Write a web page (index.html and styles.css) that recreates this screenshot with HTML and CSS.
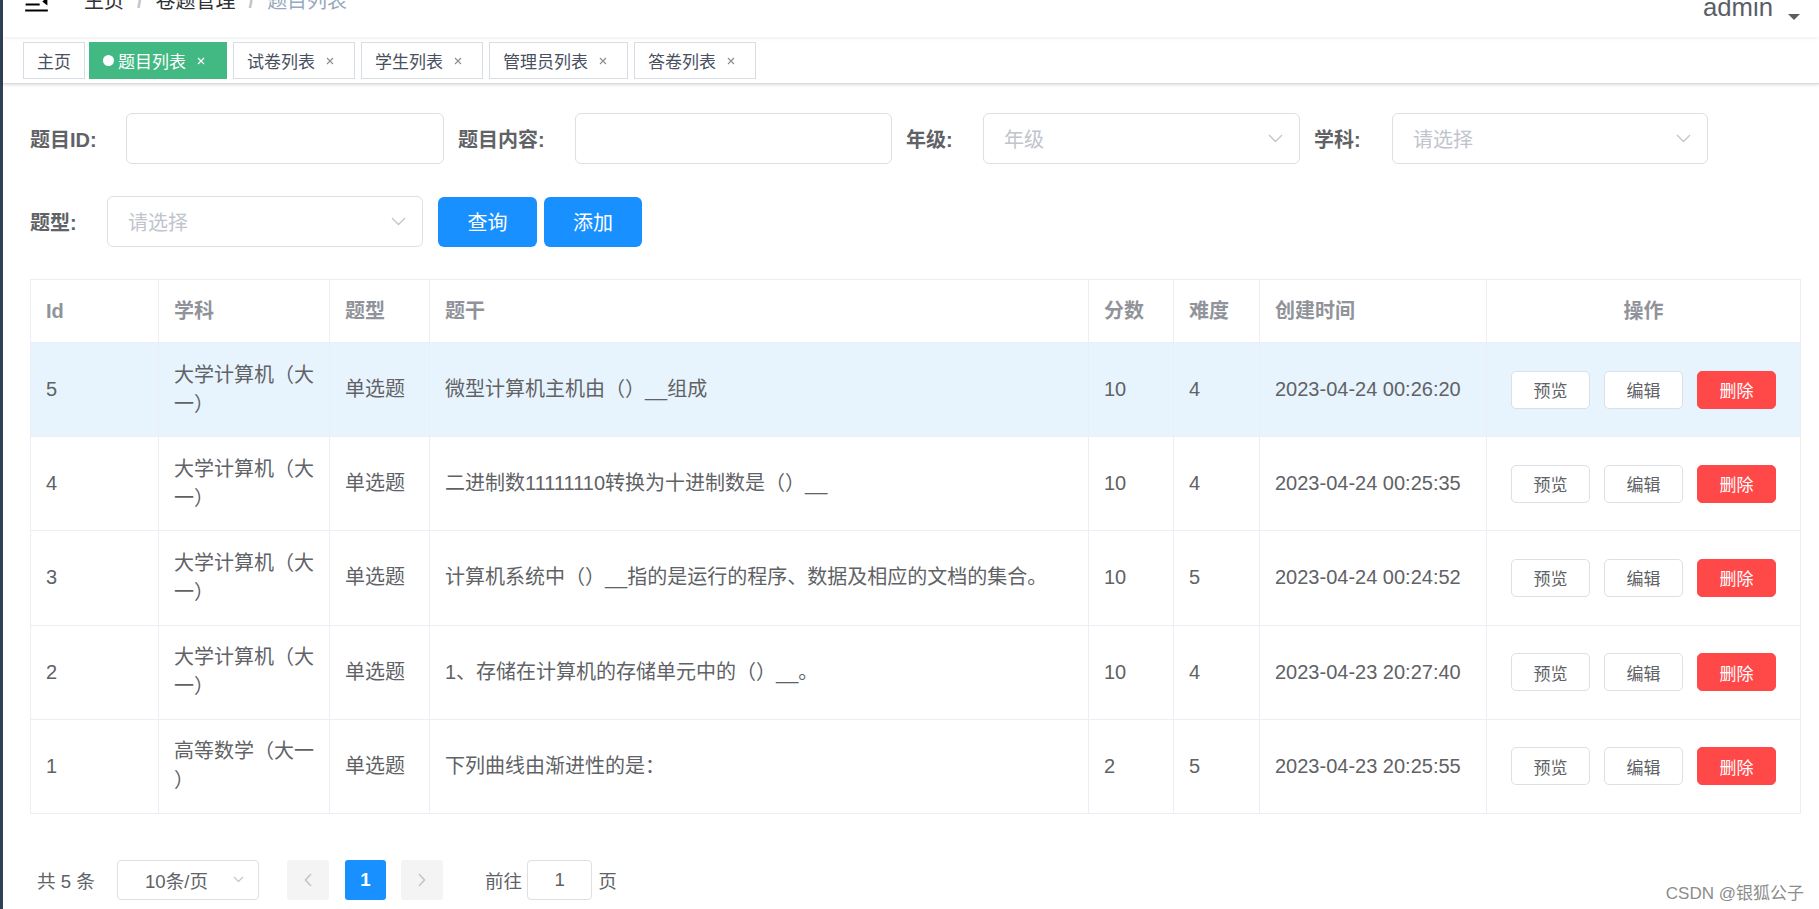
FILE: index.html
```html
<!DOCTYPE html>
<html lang="zh-CN">
<head>
<meta charset="utf-8">
<title>题目列表</title>
<link rel="stylesheet" href="styles.css">
</head>
<body>
<div class="app">
  <aside class="sidebar"></aside>
  <div class="main">
    <div class="navbar">
      <div class="hamburger">
        <svg class="ham-icon" viewBox="0 0 1024 1024" width="29" height="29"><path transform="rotate(180 512 512)" fill="#000" d="M408 442h480c4.4 0 8-3.6 8-8v-56c0-4.4-3.6-8-8-8H408c-4.4 0-8 3.6-8 8v56c0 4.4 3.6 8 8 8zm-8 204c0 4.4 3.6 8 8 8h480c4.4 0 8-3.6 8-8v-56c0-4.4-3.6-8-8-8H408c-4.4 0-8 3.6-8 8v56zm504-486H120c-4.4 0-8 3.6-8 8v56c0 4.4 3.6 8 8 8h784c4.4 0 8-3.6 8-8v-56c0-4.4-3.6-8-8-8zm0 632H120c-4.4 0-8 3.6-8 8v56c0 4.4 3.6 8 8 8h784c4.4 0 8-3.6 8-8v-56c0-4.4-3.6-8-8-8zM142.4 642.1L298.7 519a8.840 8.840 0 0 0 0-13.9L142.4 381.9c-5.8-4.6-14.4-.5-14.4 6.9v246.3a8.9 8.9 0 0 0 14.4 7z"/></svg>
      </div>
      <nav class="breadcrumb">
        <span class="bc-item">主页</span><span class="bc-sep">/</span><span class="bc-item">卷题管理</span><span class="bc-sep">/</span><span class="bc-item bc-last">题目列表</span>
      </nav>
      <div class="right-menu">
        <span class="user">admin</span>
        <svg class="caret" width="12" height="6" viewBox="0 0 12 6"><path d="M0 0h12L6 6z" fill="#5a5e66"/></svg>
      </div>
    </div>

    <div class="tags-view">
      <span class="tag">主页</span>
      <span class="tag active"><i class="dot"></i>题目列表<span class="close"><svg width="8" height="8" viewBox="0 0 8 8"><path d="M1 1l6 6M7 1L1 7" stroke="currentColor" stroke-width="1.2"/></svg></span></span>
      <span class="tag">试卷列表<span class="close"><svg width="8" height="8" viewBox="0 0 8 8"><path d="M1 1l6 6M7 1L1 7" stroke="currentColor" stroke-width="1.2"/></svg></span></span>
      <span class="tag">学生列表<span class="close"><svg width="8" height="8" viewBox="0 0 8 8"><path d="M1 1l6 6M7 1L1 7" stroke="currentColor" stroke-width="1.2"/></svg></span></span>
      <span class="tag">管理员列表<span class="close"><svg width="8" height="8" viewBox="0 0 8 8"><path d="M1 1l6 6M7 1L1 7" stroke="currentColor" stroke-width="1.2"/></svg></span></span>
      <span class="tag">答卷列表<span class="close"><svg width="8" height="8" viewBox="0 0 8 8"><path d="M1 1l6 6M7 1L1 7" stroke="currentColor" stroke-width="1.2"/></svg></span></span>
    </div>

    <div class="content">
      <div class="search">
        <div class="form-row">
          <div class="form-item"><label class="label w96">题目ID:</label><div class="input w318"></div></div>
          <div class="form-item"><label class="label w117">题目内容:</label><div class="input w317"></div></div>
          <div class="form-item"><label class="label w77">年级:</label><div class="input w317"><span class="ph">年级</span><svg class="arrow" width="15" height="9" viewBox="0 0 15 9"><path d="M1 1l6.5 6.5L14 1" fill="none" stroke="#c0c4cc" stroke-width="1.3"/></svg></div></div>
          <div class="form-item"><label class="label w78">学科:</label><div class="input w316"><span class="ph">请选择</span><svg class="arrow" width="15" height="9" viewBox="0 0 15 9"><path d="M1 1l6.5 6.5L14 1" fill="none" stroke="#c0c4cc" stroke-width="1.3"/></svg></div></div>
        </div>
        <div class="form-row">
          <div class="form-item"><label class="label w77">题型:</label><div class="input w316"><span class="ph">请选择</span><svg class="arrow" width="15" height="9" viewBox="0 0 15 9"><path d="M1 1l6.5 6.5L14 1" fill="none" stroke="#c0c4cc" stroke-width="1.3"/></svg></div></div>
          <button class="btn-primary b1">查询</button>
          <button class="btn-primary b2">添加</button>
        </div>
      </div>

      <table class="grid">
        <colgroup>
          <col style="width:128px"><col style="width:171px"><col style="width:100px"><col style="width:659px"><col style="width:85px"><col style="width:86px"><col style="width:227px"><col style="width:314px">
        </colgroup>
        <thead>
          <tr><th>Id</th><th>学科</th><th>题型</th><th>题干</th><th>分数</th><th>难度</th><th>创建时间</th><th class="center">操作</th></tr>
        </thead>
        <tbody>
          <tr class="hover">
            <td>5</td><td class="subj">大学计算机（大一）</td><td>单选题</td><td>微型计算机主机由（）__组成</td><td>10</td><td>4</td><td>2023-04-24 00:26:20</td>
            <td><div class="ops"><button class="btn">预览</button><button class="btn">编辑</button><button class="btn danger">删除</button></div></td>
          </tr>
          <tr>
            <td>4</td><td class="subj">大学计算机（大一）</td><td>单选题</td><td>二进制数11111110转换为十进制数是（）__</td><td>10</td><td>4</td><td>2023-04-24 00:25:35</td>
            <td><div class="ops"><button class="btn">预览</button><button class="btn">编辑</button><button class="btn danger">删除</button></div></td>
          </tr>
          <tr>
            <td>3</td><td class="subj">大学计算机（大一）</td><td>单选题</td><td>计算机系统中（）__指的是运行的程序、数据及相应的文档的集合。</td><td>10</td><td>5</td><td>2023-04-24 00:24:52</td>
            <td><div class="ops"><button class="btn">预览</button><button class="btn">编辑</button><button class="btn danger">删除</button></div></td>
          </tr>
          <tr>
            <td>2</td><td class="subj">大学计算机（大一）</td><td>单选题</td><td>1、存储在计算机的存储单元中的（）__。</td><td>10</td><td>4</td><td>2023-04-23 20:27:40</td>
            <td><div class="ops"><button class="btn">预览</button><button class="btn">编辑</button><button class="btn danger">删除</button></div></td>
          </tr>
          <tr>
            <td>1</td><td class="subj">高等数学（大一）</td><td>单选题</td><td>下列曲线由渐进性的是：</td><td>2</td><td>5</td><td>2023-04-23 20:25:55</td>
            <td><div class="ops"><button class="btn">预览</button><button class="btn">编辑</button><button class="btn danger">删除</button></div></td>
          </tr>
        </tbody>
      </table>

      <div class="pagination">
        <span class="total">共 5 条</span>
        <div class="sizes"><span>10条/页</span><svg width="11" height="7" viewBox="0 0 11 7"><path d="M1 1l4.5 4.5L10 1" fill="none" stroke="#c0c4cc" stroke-width="1.2"/></svg></div>
        <span class="pg-btn prev"><svg width="8" height="14" viewBox="0 0 8 14"><path d="M7 1L1.5 7 7 13" fill="none" stroke="#c0c4cc" stroke-width="1.6"/></svg></span>
        <span class="pager">1</span>
        <span class="pg-btn next"><svg width="8" height="14" viewBox="0 0 8 14"><path d="M1 1l5.5 6L1 13" fill="none" stroke="#c0c4cc" stroke-width="1.6"/></svg></span>
        <span class="goto">前往</span>
        <span class="jump">1</span>
        <span class="page-word">页</span>
      </div>
    </div>
  </div>
</div>
<div class="watermark">CSDN @银狐公子</div>
</body>
</html>
```

FILE: styles.css
```css
html, body {
  margin: 0;
  padding: 0;
  height: 100%;
  overflow: hidden;
  background: #fff;
}
body {
  font-family: "Liberation Sans", "Noto Sans CJK SC", sans-serif;
  color: #606266;
}
.app {
  display: flex;
  height: 909px;
}
.sidebar {
  width: 3px;
  flex: none;
  background: #304156;
}
.main {
  flex: 1;
  min-width: 0;
  display: flex;
  flex-direction: column;
}

/* navbar */
.navbar {
  height: 72px;
  margin-top: -35px;
  display: flex;
  align-items: center;
  box-shadow: 0 1px 4px rgba(0, 21, 41, 0.08);
  position: relative;
  z-index: 2;
  background: #fff;
}
.hamburger {
  padding: 0 21px 0 19px;
  display: flex;
  align-items: center;
}
.ham-icon { display: block; }
.breadcrumb {
  margin-left: 12px;
  font-size: 20px;
  line-height: 72px;
  display: flex;
}
.bc-item { color: #303133; }
.bc-last { color: #97a8be; }
.bc-sep {
  color: #c0c4cc;
  margin: 0 13px;
  font-weight: bold;
}
.right-menu {
  margin-left: auto;
  align-self: flex-start;
  margin-top: 27px;
  padding-right: 19px;
  display: flex;
  align-items: flex-start;
}
.user {
  font-size: 25.7px;
  line-height: 30px;
  color: #5a5e66;
}
.caret {
  margin-left: 15px;
  margin-top: 22px;
}

/* tags */
.tags-view {
  height: 46px;
  border-bottom: 1px solid #d8dce5;
  box-shadow: 0 1px 3px 0 rgba(0, 0, 0, 0.12), 0 0 3px 0 rgba(0, 0, 0, 0.04);
  display: flex;
  align-items: flex-start;
  padding-left: 20px;
  background: #fff;
}
.tag {
  margin-top: 5px;
  height: 37px;
  box-sizing: border-box;
  border: 1px solid #d8dce5;
  background: #fff;
  color: #495060;
  font-size: 17px;
  padding: 0 13px;
  margin-right: 6px;
  display: flex;
  align-items: center;
}
.tag:first-child { margin-right: 4px; }
.tag.active {
  background: #42b983;
  border-color: #42b983;
  color: #fff;
  padding-right: 14px;
}
.dot {
  width: 11px;
  height: 11px;
  border-radius: 50%;
  background: #fff;
  margin-right: 4px;
}
.close {
  width: 22px;
  margin-left: 4px;
  display: flex;
  justify-content: center;
  align-items: center;
  color: #8a8f99;
}
.tag.active .close { color: #fff; }

/* content */
.content {
  padding: 29px 19px 0 27px;
}
.form-row {
  display: flex;
  align-items: center;
  height: 51px;
  margin-bottom: 32px;
}
.form-item {
  display: flex;
  align-items: center;
  margin-right: 14px;
}
.label {
  font-size: 20px;
  font-weight: bold;
  color: #606266;
}
.w96 { width: 96px; }
.w117 { width: 117px; }
.w77 { width: 77px; }
.w78 { width: 78px; }
.input {
  height: 51px;
  box-sizing: border-box;
  border: 1px solid #dcdfe6;
  border-radius: 6px;
  padding: 0 16px 0 20px;
  display: flex;
  align-items: center;
  justify-content: space-between;
}
.w318 { width: 318px; }
.w317 { width: 317px; }
.w316 { width: 316px; }
.ph {
  font-size: 20px;
  color: #c0c4cc;
}
.btn-primary {
  height: 50px;
  border: none;
  border-radius: 6px;
  background: #1890ff;
  color: #fff;
  font-family: inherit;
  font-size: 20px;
  padding: 0;
}
.b1 { width: 99px; margin-left: 1px; }
.b2 { width: 98px; margin-left: 7px; }

/* table */
.grid {
  width: 1770px;
  table-layout: fixed;
  border-collapse: collapse;
  border: 1px solid #ebeef5;
}
.grid th, .grid td {
  border: 1px solid #ebeef5;
  text-align: left;
  line-height: 29px;
  font-size: 20px;
}
.grid th {
  padding: 16.5px 15px;
  color: #909399;
  font-weight: bold;
}
.grid th.center { text-align: center; }
.grid td {
  padding: 17.6px 15px;
  color: #606266;
  vertical-align: middle;
}
.grid td.subj {
  padding-right: 12px;
  line-break: anywhere;
}
.grid tr.hover td { background: #e8f4fd; }
.ops {
  display: flex;
  justify-content: center;
  gap: 14px;
}
.btn {
  width: 79px;
  height: 38px;
  box-sizing: border-box;
  border: 1px solid #dcdfe6;
  border-radius: 5px;
  background: #fff;
  color: #606266;
  font-family: inherit;
  font-size: 17px;
  padding: 0;
}
.btn.danger {
  background: #ff4949;
  border-color: #ff4949;
  color: #fff;
}

/* pagination */
.pagination {
  margin-top: 46px;
  height: 40px;
  display: flex;
  align-items: center;
  padding-left: 7px;
  font-size: 18.6px;
  color: #606266;
}
.total { width: 80px; }
.sizes {
  width: 142px;
  height: 40px;
  box-sizing: border-box;
  border: 1px solid #dcdfe6;
  border-radius: 4px;
  display: flex;
  align-items: center;
  justify-content: space-between;
  padding: 0 14px 0 27px;
}
.pg-btn {
  width: 42px;
  height: 40px;
  border-radius: 3px;
  background: #f4f4f5;
  display: flex;
  align-items: center;
  justify-content: center;
}
.prev { margin-left: 28px; }
.pager {
  width: 41px;
  height: 40px;
  margin: 0 15px 0 16px;
  border-radius: 3px;
  background: #1890ff;
  color: #fff;
  font-weight: bold;
  display: flex;
  align-items: center;
  justify-content: center;
}
.goto { margin-left: 42px; }
.jump {
  width: 65px;
  height: 40px;
  margin-left: 5px;
  box-sizing: border-box;
  border: 1px solid #dcdfe6;
  border-radius: 4px;
  display: flex;
  align-items: center;
  justify-content: center;
}
.page-word { margin-left: 6px; }

.watermark {
  position: absolute;
  right: 15px;
  top: 879px;
  font-size: 17px;
  color: #8c8c8c;
  text-shadow: 0 0 1px #fff;
}
```
